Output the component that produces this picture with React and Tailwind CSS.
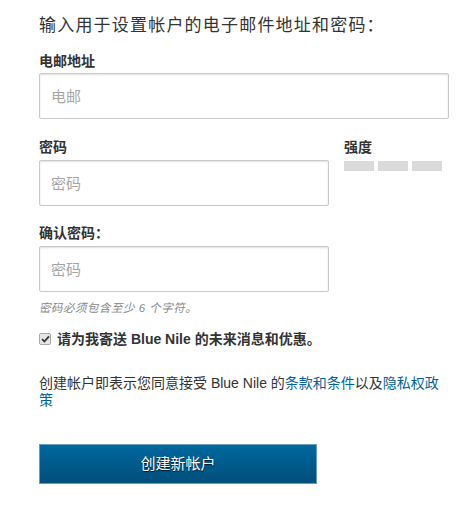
import React from "react";

const font = { fontFamily: '"Liberation Sans","Noto Sans CJK SC",sans-serif' };

function Field({ placeholder, className }) {
  return (
    <input
      type="text"
      placeholder={placeholder}
      className={
        "block h-[46px] rounded-[2px] border border-[#c9c9c9] bg-white pl-[11px] text-[15px] text-[#333] outline-none shadow-[inset_0_1px_2px_rgba(0,0,0,0.12)] placeholder:text-[#a6a6a6] " +
        className
      }
      style={font}
    />
  );
}

export default function App() {
  return (
    <div className="w-[473px] h-[512px] bg-white pl-[39px] pt-[14px] text-[#333]" style={font}>
      <h2 className="text-[17px] leading-[24px] tracking-[1.2px] font-normal text-[#333]">
        输入用于设置帐户的电子邮件地址和密码：
      </h2>

      <div className="mt-[15px] text-[14px] leading-[16px] font-bold">电邮地址</div>
      <Field placeholder="电邮" className="mt-[4px] w-[410px]" />

      <div className="mt-[20px] flex gap-[15px]">
        <div>
          <div className="text-[14px] leading-[16px] font-bold">密码</div>
          <Field placeholder="密码" className="mt-[5px] w-[290px]" />
        </div>
        <div>
          <div className="text-[14px] leading-[16px] font-bold">强度</div>
          <div className="mt-[6px] flex gap-[4px]">
            <div className="h-[10px] w-[30px] bg-[#dadada]" />
            <div className="h-[10px] w-[30px] bg-[#dadada]" />
            <div className="h-[10px] w-[30px] bg-[#dadada]" />
          </div>
        </div>
      </div>

      <div className="mt-[19px] text-[14px] leading-[16px] font-bold">确认密码：</div>
      <Field placeholder="密码" className="mt-[5px] w-[290px] h-[45px]" />
      <div className="mt-[9px] text-[11.5px] leading-[14px] italic tracking-[0.5px] text-[#888]">密码必须包含至少 6 个字符。</div>

      <div className="mt-[15px] flex items-center gap-[6px]">
        <span className="flex h-[12px] w-[12px] items-center justify-center rounded-[2px] border border-[#a9a9a9] bg-[#e6e6e6]">
          <svg width="9" height="8" viewBox="0 0 9 8">
            <path d="M1 4.2 L3.4 6.5 L8 1.3" fill="none" stroke="#333" strokeWidth="1.8" />
          </svg>
        </span>
        <span className="text-[14px] leading-[18px] font-bold">请为我寄送 Blue Nile 的未来消息和优惠。</span>
      </div>

      <p className="mt-[27px] w-[410px] text-[14px] leading-[17px] text-[#333]">
        创建帐户即表示您同意接受 Blue Nile 的
        <a className="text-[#00649a]">条款和条件</a>以及<a className="text-[#00649a]">隐私权政策</a>
      </p>

      <button
        className="mt-[35px] flex h-[40px] w-[278px] items-center justify-center border border-[#6a9cbd] bg-gradient-to-b from-[#00689e] to-[#004e7a] text-[15px] text-white [text-shadow:0_1px_1px_rgba(0,0,0,0.8)]"
        style={font}
      >
        创建新帐户
      </button>
    </div>
  );
}
